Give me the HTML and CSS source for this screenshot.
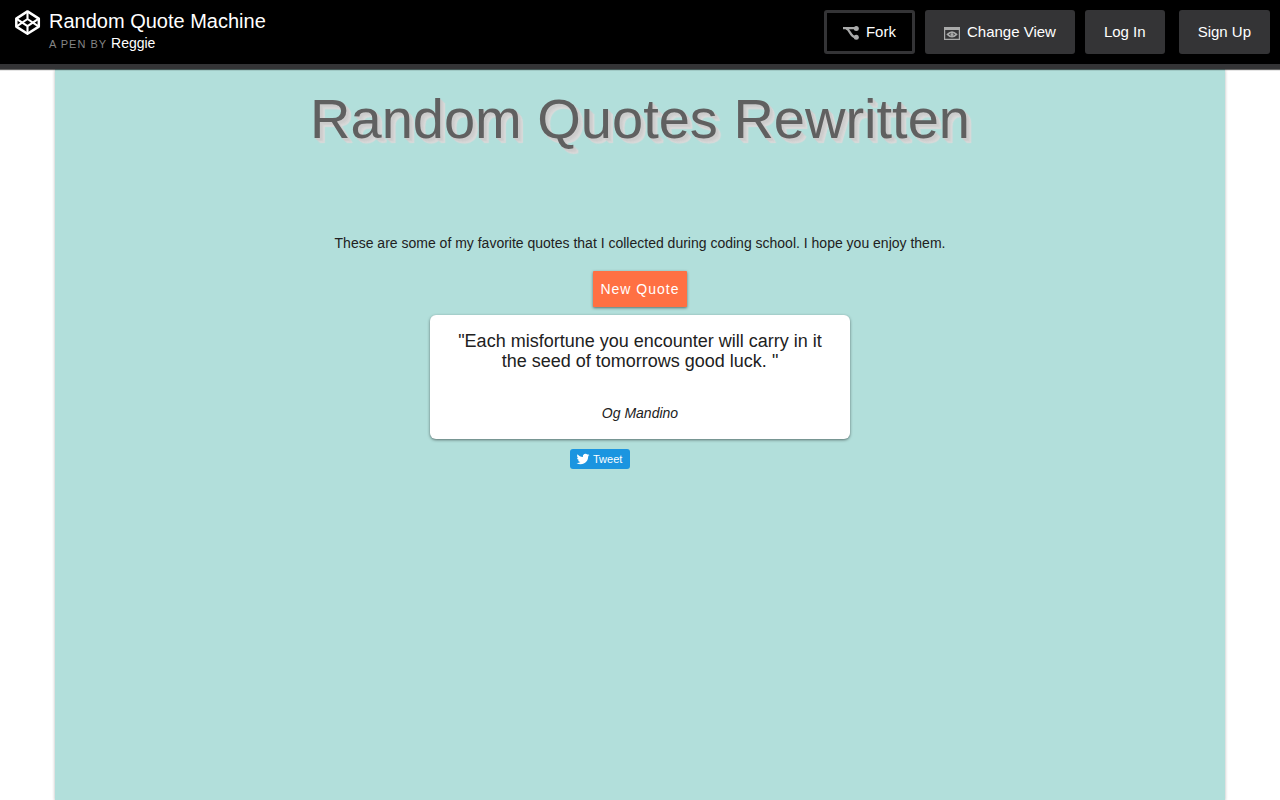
FILE: index.html
```html
<!DOCTYPE html>
<html lang="en">
<head>
<meta charset="utf-8">
<meta name="viewport" content="width=device-width, initial-scale=1">
<title>Random Quote Machine</title>
<link rel="stylesheet" href="styles.css">
</head>
<body>
<header class="topbar">
  <div class="brand">
    <a class="logo" href="#" aria-label="Home">
      <svg viewBox="0 0 26 26" width="26" height="26" fill="none" stroke="currentColor" stroke-width="2.5" stroke-linejoin="round">
        <path d="M12.5 1.4 23.8 8.6v8L12.5 23.8 1.3 16.6v-8Z"/>
        <path d="M1.3 8.6 12.5 16.2 23.8 8.6M1.3 16.6 12.5 9l11.3 7.6M12.5 1.4V9M12.5 16.2v7.6" stroke-width="2.1"/>
      </svg>
    </a>
    <div class="pen">
      <h1 class="pen-title">Random Quote Machine</h1>
      <p class="pen-author"><span class="by">A PEN BY</span> <a href="#">Reggie</a></p>
    </div>
  </div>
  <nav class="actions">
    <button class="btn btn-outline" type="button">
      <svg viewBox="0 0 16 14" width="16" height="14" fill="none" stroke="currentColor" stroke-width="2.2">
        <path d="M0 2.2h13M3 2.4C7.5 3.5 6.500 10.500 13 11.500"/>
        <circle cx="13.300" cy="2.500" r="2.500" fill="currentColor" stroke="none"/>
        <circle cx="13.300" cy="11.300" r="2.500" fill="currentColor" stroke="none"/>
      </svg>
      Fork
    </button>
    <button class="btn" type="button">
      <svg viewBox="0 0 16 14" width="16" height="14">
        <path fill="currentColor" fill-rule="evenodd" d="M0 1h16v13H0ZM1.200 4v8.800h13.600V4Z"/>
        <path fill="none" stroke="currentColor" stroke-width="1.600" d="M3.500 8.400Q8 3.800 12.500 8.400 8 13 3.500 8.400Z"/>
        <circle cx="8" cy="8.400" r="1.500" fill="currentColor"/>
      </svg>
      Change View
    </button>
    <button class="btn" type="button">Log In</button>
    <button class="btn btn-signup" type="button">Sign Up</button>
  </nav>
</header>
<main class="page">
  <h2 class="headline">Random Quotes Rewritten</h2>
  <p class="intro">These are some of my favorite quotes that I collected during coding school. I hope you enjoy them.</p>
  <button class="new-quote" type="button">New Quote</button>
  <section class="card">
    <blockquote class="quote">"Each misfortune you encounter will carry in it the seed of tomorrows good luck. "</blockquote>
    <p class="author">Og Mandino</p>
  </section>
  <div class="share">
    <a class="tweet" href="#">
      <svg viewBox="-1 -1 26 26" width="14" height="14" fill="currentColor"><path d="M23.95 4.57a10 10 0 0 1-2.82.77 4.96 4.96 0 0 0 2.16-2.72c-.95.55-2 .95-3.13 1.18a4.92 4.92 0 0 0-8.38 4.48C7.69 8.1 4.07 6.13 1.64 3.16a4.92 4.92 0 0 0 1.52 6.57 4.9 4.9 0 0 1-2.23-.61v.06c0 2.38 1.7 4.37 3.95 4.82a5 5 0 0 1-2.21.09 4.94 4.94 0 0 0 4.6 3.42A9.87 9.87 0 0 1 0 19.54a14 14 0 0 0 7.55 2.21c9.05 0 14-7.5 14-13.98 0-.21 0-.42-.02-.63a9.94 9.94 0 0 0 2.42-2.57Z"/></svg>
      <span class="tweet-label">Tweet</span>
    </a>
  </div>
</main>
</body>
</html>
```
FILE: styles.css
```css
* {
  box-sizing: border-box;
}

body {
  margin: 0;
  min-height: 100vh;
  display: flex;
  flex-direction: column;
  background: #fff;
  color: #212121;
  font: 14px/20px "Liberation Sans", Arial, sans-serif;
}

h1, h2, p, blockquote {
  margin: 0;
  font-weight: 400;
}

button {
  font-family: inherit;
  cursor: pointer;
}

a {
  color: inherit;
  text-decoration: none;
}

.topbar {
  position: relative;
  display: flex;
  justify-content: space-between;
  align-items: flex-start;
  padding: 10px 10px 10px 15px;
  background: #000;
  border-bottom: 5px solid #343436;
  box-shadow: 0 1px 1px rgba(0, 0, 0, 0.6);
  color: #fff;
}

.brand {
  display: flex;
  gap: 8px;
}

.logo svg,
.btn svg,
.tweet svg {
  display: block;
}

.pen-title {
  font-size: 20px;
  line-height: 22px;
}

.by {
  color: #858585;
  font-size: 11px;
  line-height: 1;
  letter-spacing: 1px;
}

.pen-author {
  line-height: 22px;
}

.actions {
  display: flex;
  gap: 10px;
}

.btn {
  display: flex;
  align-items: center;
  gap: 7px;
  height: 44px;
  padding: 0 16px 2px;
  border: 3px solid #343436;
  border-radius: 3px;
  background: #343436;
  color: #fff;
  font-size: 15px;
}

.btn svg {
  color: #a9aaaa;
  margin-top: 4px;
}

.btn-outline {
  background: #000;
}

.btn-signup {
  margin-left: 4px;
}

.page {
  flex: 1;
  display: flex;
  flex-direction: column;
  align-items: center;
  width: 100%;
  max-width: 1170px;
  margin: 0 auto;
  padding: 18px 15px 40px;
  background: #b2dfdb;
  box-shadow: 0 1px 3px rgba(0, 0, 0, 0.3);
  text-align: center;
}

.headline {
  margin-bottom: 82px;
  color: #606060;
  font-size: 56px;
  line-height: 64px;
  text-shadow:
    1px 1px 1px #ccc,
    2px 2px 1px #ccc,
    3px 3px 1px #d0d0d0,
    4px 4px 1px #d6d6d6,
    5px 5px 1px #dadada;
}

.intro {
  margin-bottom: 18px;
}

.new-quote {
  height: 36px;
  margin-bottom: 8px;
  padding: 0 7px;
  border: 0;
  border-radius: 1px;
  background: #ff7043;
  box-shadow: 0 1px 3px rgba(0, 0, 0, 0.5);
  color: #fff;
  font-size: 14px;
  letter-spacing: 1px;
}

.card {
  width: 100%;
  max-width: 420px;
  padding: 16px 20px;
  border-radius: 6px;
  background: #fff;
  box-shadow: 0 1px 3px rgba(0, 0, 0, 0.5);
}

.quote {
  margin-bottom: 32px;
  font-size: 18px;
}

.author {
  font-style: italic;
}

.share {
  display: flex;
  width: 100%;
  max-width: 140px;
  margin-top: 10px;
}

.tweet {
  display: flex;
  align-items: center;
  gap: 3px;
  height: 20px;
  padding: 0 8px 0 6px;
  border-radius: 3px;
  background: #1b95e0;
  color: #fff;
  font-size: 11px;
}

.tweet-label {
  padding-bottom: 1px;
}
```
